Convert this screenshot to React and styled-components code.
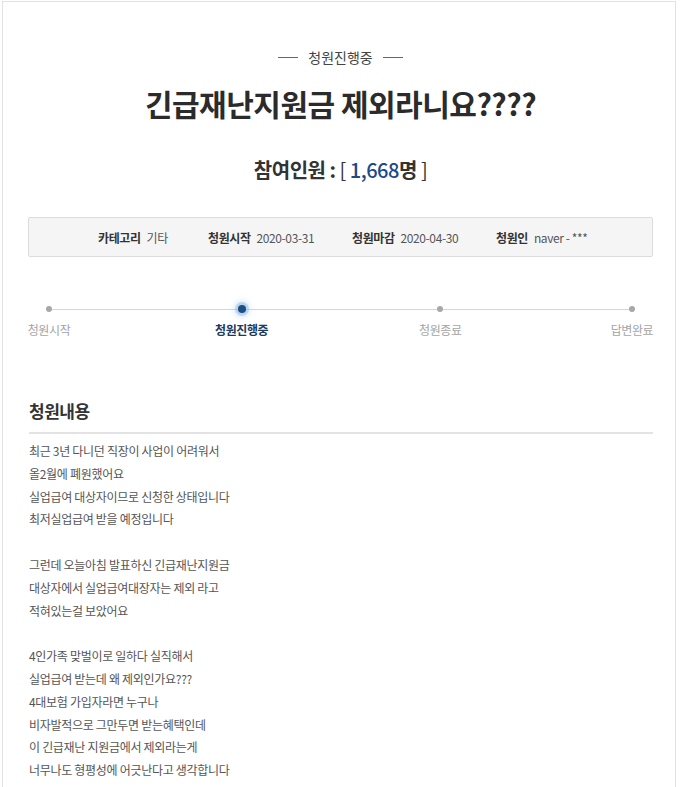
import React from "react"
import styled, { createGlobalStyle } from "styled-components"

const GlobalStyle = createGlobalStyle`
  html, body {
    margin: 0;
    padding: 0;
    background: #fff;
  }
  body {
    font-family: "Noto Sans CJK KR", "Noto Sans", sans-serif;
    color: #333;
  }
`;

const Page = styled.div`
  width: 674px;
  min-height: 800px;
  margin: 1px 0 0 2px;
  border: 1px solid #e2e2e2;
  border-bottom: none;
  padding: 0 22px 0 25px;
  box-sizing: border-box;
`;

const Status = styled.div`
  display: flex;
  align-items: center;
  justify-content: center;
  gap: 10px;
  padding-top: 44px;
  font-size: 14px;
  color: #444;
  line-height: 22px;
  &::before, &::after {
    content: "";
    width: 20px;
    height: 1px;
    background: #666;
  }
`;

const Title = styled.h1`
  margin: 15px 0 0;
  text-align: center;
  font-size: 30px;
  font-weight: 700;
  color: #2b2b2b;
  line-height: 40px;
  letter-spacing: -0.5px;
`;

const Count = styled.div`
  margin-top: 32px;
  text-align: center;
  font-size: 20px;
  font-weight: 700;
  color: #333;
  line-height: 30px;
  letter-spacing: -0.5px;
`;

const Num = styled.span`
  color: #1d4a86;
  font-weight: 500;
`;

const Bracket = styled.span`
  font-weight: 400;
`;

const InfoBox = styled.div`
  margin-top: 32px;
  height: 40px;
  background: #f5f5f5;
  border: 1px solid #dcdcdc;
  border-radius: 2px;
  box-sizing: border-box;
  display: flex;
  align-items: center;
  padding-left: 69px;
  font-size: 12px;
  color: #555;
`;

const InfoItem = styled.div`
  width: ${p => p.$w}px;
  display: flex;
  gap: 6px;
  white-space: nowrap;
  letter-spacing: -0.4px;
`;

const Label = styled.b`
  font-weight: 700;
  color: #333;
`;

const Steps = styled.div`
  position: relative;
  margin-top: 49px;
  display: flex;
  justify-content: space-between;
  &::before {
    content: "";
    position: absolute;
    left: 20px;
    right: 21px;
    top: 3px;
    height: 1px;
    background: #d6d6d6;
  }
`;

const Step = styled.div`
  position: relative;
  width: ${p => p.$w}px;
  display: flex;
  flex-direction: column;
  align-items: center;
  gap: 10px;
`;

const Dot = styled.span`
  width: ${p => (p.$active ? 8 : 6)}px;
  height: ${p => (p.$active ? 8 : 6)}px;
  margin-top: ${p => (p.$active ? -1 : 0)}px;
  margin-bottom: ${p => (p.$active ? -1 : 0)}px;
  border-radius: 50%;
  background: ${p => (p.$active ? "#1b4f84" : "#a8a8a8")};
  box-shadow: ${p => (p.$active ? "0 0 0 3px rgba(120,170,220,0.35), 0 0 6px 4px rgba(140,185,230,0.35)" : "none")};
`;

const StepLabel = styled.span`
  font-size: 12px;
  line-height: 16px;
  white-space: nowrap;
  color: ${p => (p.$active ? "#1b3a5e" : "#a4a4a4")};
  font-weight: ${p => (p.$active ? 700 : 400)};
  letter-spacing: -0.4px;
`;

const SectionTitle = styled.h2`
  margin: 60px 0 0 1px;
  padding-bottom: 8px;
  border-bottom: 2px solid #e3e3e3;
  font-size: 17px;
  font-weight: 700;
  color: #333;
  line-height: 26px;
  letter-spacing: -0.5px;
`;

const Body = styled.div`
  margin: 6px 0 0 1px;
  font-size: 12px;
  line-height: 22.8px;
  color: #555;
  white-space: pre-line;
  letter-spacing: -0.3px;
`;

const info = [
  { label: "카테고리", value: "기타", w: 110 },
  { label: "청원시작", value: "2020-03-31", w: 144 },
  { label: "청원마감", value: "2020-04-30", w: 144 },
  { label: "청원인", value: "naver - ***", w: 120 },
];

const steps = [
  { name: "청원시작", w: 42 },
  { name: "청원진행중", w: 56 },
  { name: "청원종료", w: 54 },
  { name: "답변완료", w: 42 },
];

const content = `최근 3년 다니던 직장이 사업이 어려워서
올2월에 폐원했어요
실업급여 대상자이므로 신청한 상태입니다
최저실업급여 받을 예정입니다

그런데 오늘아침 발표하신 긴급재난지원금
대상자에서 실업급여대장자는 제외 라고
적혀있는걸 보았어요

4인가족 맞벌이로 일하다 실직해서
실업급여 받는데 왜 제외인가요???
4대보험 가입자라면 누구나
비자발적으로 그만두면 받는혜택인데
이 긴급재난 지원금에서 제외라는게
너무나도 형평성에 어긋난다고 생각합니다`;

export default function App() {
  return (
    <>
      <GlobalStyle />
      <Page>
        <Status>청원진행중</Status>
        <Title>긴급재난지원금 제외라니요????</Title>
        <Count>
          참여인원 : <Bracket>[</Bracket> <Num>1,668</Num>명 <Bracket>]</Bracket>
        </Count>
        <InfoBox>
          {info.map(i => (
            <InfoItem key={i.label} $w={i.w}>
              <Label>{i.label}</Label>
              <span>{i.value}</span>
            </InfoItem>
          ))}
        </InfoBox>
        <Steps>
          {steps.map((s, idx) => (
            <Step key={s.name} $w={s.w}>
              <Dot $active={idx === 1} />
              <StepLabel $active={idx === 1}>{s.name}</StepLabel>
            </Step>
          ))}
        </Steps>
        <SectionTitle>청원내용</SectionTitle>
        <Body>{content}</Body>
      </Page>
    </>
  );
}
